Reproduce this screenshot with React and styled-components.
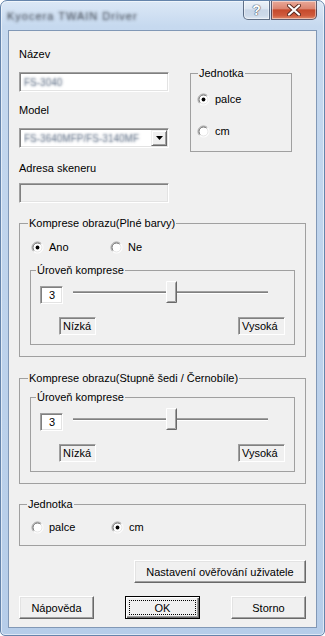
import styled, { createGlobalStyle, css } from 'styled-components';

const font = `"Liberation Sans", Arial, sans-serif`;

const GlobalStyle = createGlobalStyle`
  html, body {
    margin: 0;
    padding: 0;
    background: #ffffff;
  }
  #root {
    width: 325px;
    height: 636px;
  }
`;

const Window = styled.div`
  width: 325px;
  height: 636px;
  box-sizing: border-box;
  display: flex;
  flex-direction: column;
  border: 1px solid #6584ab;
  border-radius: 7px 7px 5px 5px;
  background: linear-gradient(180deg, #dce8f6 0%, #c6d9ef 4%, #bed3ec 45%, #b6cde9 100%);
  box-shadow: inset 0 0 0 1px rgba(255, 255, 255, 0.55);
  overflow: hidden;
  font-family: ${font};
`;

const TitleBar = styled.div`
  height: 29px;
  flex: none;
  display: flex;
  align-items: flex-start;
  padding: 0 7px 0 6px;
`;

/* the title is smudged in the reference, so it is drawn as a soft shadow */
const Title = styled.span`
  display: inline-block;
  margin-top: 9px;
  font-size: 11px;
  letter-spacing: 1px;
  color: transparent;
  text-shadow: 0 0 3px rgba(40, 45, 55, 0.9);
`;

const CaptionButtons = styled.div`
  margin-left: auto;
  display: flex;
  gap: 1px;
`;

const CaptionButton = styled.div`
  box-sizing: border-box;
  height: 19px;
  width: ${(p) => p.$w}px;
  display: flex;
  align-items: center;
  justify-content: center;
  border: 1px solid rgba(52, 70, 98, 0.75);
  border-top: none;
  box-shadow: inset 0 0 0 1px rgba(255, 255, 255, 0.45);
  ${(p) =>
    p.$close
      ? css`
          border-radius: 0 0 5px 0;
          background: linear-gradient(180deg, #e9a999 0%, #dc8672 42%, #c54a2c 50%, #cf5a3c 80%, #e08a6a 100%);
        `
      : css`
          border-radius: 0 0 0 5px;
          background: linear-gradient(180deg, #edf2f8 0%, #dde6f1 42%, #c9d6e7 50%, #ccd9e9 80%, #dfe8f3 100%);
        `}
`;

const HelpGlyph = styled.span`
  font: bold 14px ${font};
  color: #ffffff;
  text-shadow: 0 0 1px #4a5564, 0 0 1px #4a5564, 0 0 1px #4a5564;
`;

const Client = styled.div`
  flex: 1;
  margin: 0 7px 7px;
  box-sizing: border-box;
  background: #f0f0f0;
  border: 1px solid #8198b6;
  padding: 17px 10px 0 10px;
  display: flex;
  flex-direction: column;
  font: 11px/13px ${font};
  color: #000000;
`;

const TopRow = styled.div`
  display: flex;
  align-items: flex-start;
`;

const LeftColumn = styled.div`
  width: 150px;
  display: flex;
  flex-direction: column;
`;

const Label = styled.div`
  height: 13px;
  margin-top: ${(p) => p.$mt || 0}px;
  white-space: nowrap;
`;

const sunken = css`
  border: 1px solid;
  border-color: #a0a0a0 #ffffff #ffffff #a0a0a0;
  box-shadow: inset 1px 1px 0 #808080, inset -1px -1px 0 #e3e3e3;
`;

const Edit = styled.div`
  box-sizing: border-box;
  width: 150px;
  height: 20px;
  margin-top: ${(p) => p.$mt || 0}px;
  background: ${(p) => (p.$disabled ? '#f0f0f0' : '#ffffff')};
  ${sunken};
  display: flex;
  align-items: center;
  padding-left: 4px;
  padding-right: ${(p) => (p.$combo ? 0 : 4)}px;
  overflow: hidden;
`;

const Blurred = styled.span`
  display: inline-block;
  font-size: 10px;
  color: transparent;
  text-shadow: 0 0 2.5px rgba(70, 88, 115, 0.95);
  white-space: nowrap;
`;

const ComboText = styled.div`
  flex: 1;
  min-width: 0;
  overflow: hidden;
`;

const DropButton = styled.div`
  box-sizing: border-box;
  flex: none;
  width: 16px;
  height: 16px;
  margin-right: 1px;
  background: #f0f0f0;
  border: 1px solid;
  border-color: #f0f0f0 #696969 #696969 #f0f0f0;
  box-shadow: inset 1px 1px 0 #ffffff, inset -1px -1px 0 #a0a0a0;
  display: flex;
  align-items: center;
  justify-content: center;
`;

const Group = styled.fieldset`
  box-sizing: border-box;
  min-width: 0;
  margin: ${(p) => p.$mt || 0}px 0 0 ${(p) => p.$ml || 0}px;
  width: ${(p) => (p.$w ? `${p.$w}px` : 'auto')};
  padding: ${(p) => p.$pad};
  border: 1px solid #a0a0a0;
  display: flex;
  flex-direction: column;
`;

const Legend = styled.legend`
  padding: 0 1px;
  margin-left: ${(p) => p.$ml || 0}px;
  line-height: 13px;
  height: 13px;
  white-space: nowrap;
`;

const RadioRow = styled.div`
  display: flex;
  align-items: center;
  margin-left: ${(p) => p.$ml || 0}px;
  margin-top: ${(p) => p.$mt || 0}px;
`;

const RadioOption = styled.div`
  display: flex;
  align-items: center;
  gap: 5px;
  height: 13px;
  width: ${(p) => (p.$w ? `${p.$w}px` : 'auto')};
  svg {
    flex: none;
  }
`;

const LevelRow = styled.div`
  display: flex;
  align-items: flex-start;
`;

const NumberBox = styled.div`
  box-sizing: border-box;
  width: 23px;
  height: 18px;
  background: #ffffff;
  ${sunken};
  line-height: 16px;
  padding-left: 8px;
`;

const SliderWrap = styled.div`
  margin: -5px 0 0 3px;
  height: 24px;
`;

const ScaleRow = styled.div`
  display: flex;
  justify-content: space-between;
  margin-top: 12px;
  padding-left: 19px;
`;

const ScaleLabel = styled.div`
  box-sizing: border-box;
  width: ${(p) => p.$w}px;
  height: 18px;
  border: 1px solid;
  border-color: #a0a0a0 #ffffff #ffffff #a0a0a0;
  box-shadow: inset 1px 1px 0 #808080;
  line-height: 16px;
  padding-left: 3px;
`;

const Button = styled.button`
  box-sizing: border-box;
  width: ${(p) => p.$w}px;
  height: 23px;
  padding: 0;
  margin: 0;
  position: relative;
  font: 11px ${font};
  color: #000000;
  background: #f0f0f0;
  border: 1px solid;
  border-color: #ffffff #696969 #696969 #ffffff;
  box-shadow: inset -1px -1px 0 #a0a0a0, inset 1px 1px 0 #e3e3e3;
  ${(p) =>
    p.$default &&
    css`
      border-color: #000000;
      box-shadow: inset 1px 1px 0 #ffffff, inset -1px -1px 0 #696969, inset -2px -2px 0 #a0a0a0;
      &::after {
        content: '';
        position: absolute;
        inset: 3px;
        border: 1px dotted #000000;
      }
    `}
`;

const RightAligned = styled.div`
  display: flex;
  justify-content: flex-end;
  margin-top: 14px;
`;

const ButtonRow = styled.div`
  display: flex;
  justify-content: space-between;
  margin-top: 13px;
`;

function Radio({ checked }) {
  return (
    <svg width="13" height="13" viewBox="0 0 13 13">
      <circle cx="6.5" cy="6.5" r="5.5" fill="#ffffff" />
      <path d="M2.6 10.4 A5.5 5.5 0 0 1 10.4 2.6" fill="none" stroke="#a0a0a0" />
      <path d="M3.3 9.7 A4.5 4.5 0 0 1 9.7 3.3" fill="none" stroke="#696969" />
      <path d="M10.4 2.6 A5.5 5.5 0 0 1 2.6 10.4" fill="none" stroke="#ffffff" />
      <path d="M9.7 3.3 A4.5 4.5 0 0 1 3.3 9.7" fill="none" stroke="#e3e3e3" />
      {checked && <circle cx="6.5" cy="6.5" r="1.9" fill="#000000" />}
    </svg>
  );
}

function Trackbar() {
  return (
    <svg width="209" height="24" viewBox="0 0 209 24">
      <rect x="7" y="10" width="195" height="1" fill="#a0a0a0" />
      <rect x="7" y="11" width="195" height="1" fill="#808080" />
      <rect x="7" y="12" width="195" height="1" fill="#ffffff" />
      <rect x="100" y="0" width="11" height="22" fill="#f0f0f0" />
      <path d="M100.5 21.5 V0.5 H110.5" fill="none" stroke="#ffffff" />
      <path d="M110.5 0.5 V21.5 H100.5" fill="none" stroke="#696969" />
      <path d="M109.5 1.5 V20.5 H101.5" fill="none" stroke="#a0a0a0" />
    </svg>
  );
}

function CompressionLevel({ mt }) {
  return (
    <Group $mt={mt} $pad="9px 9px 9px 9px">
      <Legend $ml={-4}>Úroveň komprese</Legend>
      <LevelRow>
        <NumberBox>3</NumberBox>
        <SliderWrap>
          <Trackbar />
        </SliderWrap>
      </LevelRow>
      <ScaleRow>
        <ScaleLabel $w={37}>Nízká</ScaleLabel>
        <ScaleLabel $w={47}>Vysoká</ScaleLabel>
      </ScaleRow>
    </Group>
  );
}

export default function App() {
  return (
    <>
      <GlobalStyle />
      <Window>
        <TitleBar>
          <Title>Kyocera TWAIN Driver</Title>
          <CaptionButtons>
            <CaptionButton $w={27}>
              <HelpGlyph>?</HelpGlyph>
            </CaptionButton>
            <CaptionButton $w={46} $close>
              <svg width="14" height="12" viewBox="0 0 14 12">
                <path d="M2 1.5 L12 10.5 M12 1.5 L2 10.5" stroke="#5a2a20" strokeWidth="4" strokeLinecap="round" />
                <path d="M2 1.5 L12 10.5 M12 1.5 L2 10.5" stroke="#ffffff" strokeWidth="2.2" strokeLinecap="round" />
              </svg>
            </CaptionButton>
          </CaptionButtons>
        </TitleBar>

        <Client>
          <TopRow>
            <LeftColumn>
              <Label>Název</Label>
              <Edit $mt={11}>
                <Blurred>FS-3040</Blurred>
              </Edit>
              <Label $mt={12}>Model</Label>
              <Edit $mt={11} $combo>
                <ComboText>
                  <Blurred>FS-3640MFP/FS-3140MF</Blurred>
                </ComboText>
                <DropButton>
                  <svg width="7" height="4" viewBox="0 0 7 4">
                    <path d="M0 0 H7 L3.5 4 Z" fill="#000000" />
                  </svg>
                </DropButton>
              </Edit>
              <Label $mt={14}>Adresa skeneru</Label>
              <Edit $mt={8} $disabled />
            </LeftColumn>

            <Group $mt={19} $ml={21} $w={102} $pad="13px 6px 13px 6px">
              <Legend $ml={1}>Jednotka</Legend>
              <RadioOption>
                <Radio checked />
                <span>palce</span>
              </RadioOption>
              <RadioRow $mt={19}>
                <RadioOption>
                  <Radio />
                  <span>cm</span>
                </RadioOption>
              </RadioRow>
            </Group>
          </TopRow>

          <Group $mt={14} $pad="11px 10px 11px 10px">
            <Legend $ml={-2}>Komprese obrazu(Plné barvy)</Legend>
            <RadioRow $ml={1}>
              <RadioOption $w={79}>
                <Radio checked />
                <span>Ano</span>
              </RadioOption>
              <RadioOption>
                <Radio />
                <span>Ne</span>
              </RadioOption>
            </RadioRow>
            <CompressionLevel mt={10} />
          </Group>

          <Group $mt={15} $pad="6px 10px 11px 10px">
            <Legend $ml={-2}>Komprese obrazu(Stupně šedi / Černobíle)</Legend>
            <CompressionLevel mt={0} />
          </Group>

          <Group $mt={14} $pad="10px 11px 11px 11px">
            <Legend $ml={-4}>Jednotka</Legend>
            <RadioRow>
              <RadioOption $w={80}>
                <Radio />
                <span>palce</span>
              </RadioOption>
              <RadioOption>
                <Radio checked />
                <span>cm</span>
              </RadioOption>
            </RadioRow>
          </Group>

          <RightAligned>
            <Button $w={172}>Nastavení ověřování uživatele</Button>
          </RightAligned>

          <ButtonRow>
            <Button $w={75}>Nápověda</Button>
            <Button $w={75} $default>
              OK
            </Button>
            <Button $w={75}>Storno</Button>
          </ButtonRow>
        </Client>
      </Window>
    </>
  );
}
